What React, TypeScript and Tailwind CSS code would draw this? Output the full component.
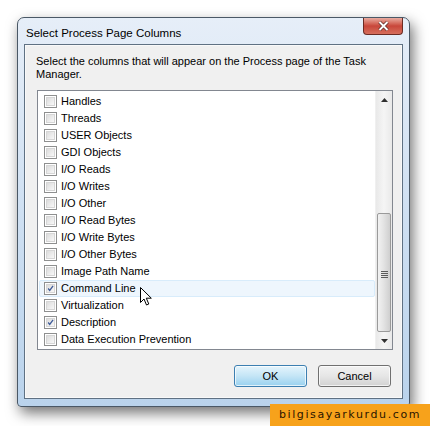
const columns = [
  { label: "Handles", checked: false },
  { label: "Threads", checked: false },
  { label: "USER Objects", checked: false },
  { label: "GDI Objects", checked: false },
  { label: "I/O Reads", checked: false },
  { label: "I/O Writes", checked: false },
  { label: "I/O Other", checked: false },
  { label: "I/O Read Bytes", checked: false },
  { label: "I/O Write Bytes", checked: false },
  { label: "I/O Other Bytes", checked: false },
  { label: "Image Path Name", checked: false },
  { label: "Command Line", checked: true, hover: true },
  { label: "Virtualization", checked: false },
  { label: "Description", checked: true },
  { label: "Data Execution Prevention", checked: false },
];

function CheckBox({ checked }: { checked: boolean }) {
  return (
    <div className="w-[13px] h-[13px] border border-[#8e8f8f] bg-white p-[1px] shrink-0">
      <div className="w-full h-full bg-gradient-to-br from-[#dcdcdc] to-[#f8f8f8] border border-[#d6d6d6] flex items-center justify-center">
        {checked && (
          <svg width="9" height="9" viewBox="0 0 9 9">
            <path d="M1.5 4.5 L3.5 7 L7.8 1.2" fill="none" stroke="#3c5a98" strokeWidth="1.6" />
          </svg>
        )}
      </div>
    </div>
  );
}

function ScrollBar() {
  return (
    <div className="w-[17px] h-full bg-gradient-to-r from-[#e9e9e9] via-[#f5f5f5] to-[#e9e9e9] flex flex-col border-l border-[#f0f0f0]">
      <div className="h-[17px] flex items-center justify-center">
        <svg width="7" height="4" viewBox="0 0 7 4"><path d="M0 4 L3.5 0 L7 4 Z" fill="#303030" /></svg>
      </div>
      <div className="flex-1 flex flex-col justify-end">
        <div className="h-[119px] mx-[1px] rounded-[2px] border border-[#9a9a9a] bg-gradient-to-r from-[#f2f2f2] via-[#e2e2e2] to-[#cfcfcf] flex items-center justify-center">
          <div className="flex flex-col gap-[1px] mt-[3px]">
            <div className="w-[7px] h-[1px] bg-[#5a5a5a]" />
            <div className="w-[7px] h-[1px] bg-[#5a5a5a]" />
            <div className="w-[7px] h-[1px] bg-[#5a5a5a]" />
            <div className="w-[7px] h-[1px] bg-[#5a5a5a]" />
          </div>
        </div>
      </div>
      <div className="h-[17px] flex items-center justify-center">
        <svg width="7" height="4" viewBox="0 0 7 4"><path d="M0 0 L7 0 L3.5 4 Z" fill="#303030" /></svg>
      </div>
    </div>
  );
}

function Cursor() {
  return (
    <svg width="13" height="20" viewBox="0 0 13 20" className="absolute left-[140px] top-[287px]">
      <path d="M0.5 0.5 L0.5 15.5 L4 12 L6.5 18 L8.8 17 L6.3 11.2 L11.3 11.2 Z" fill="white" stroke="black" strokeWidth="1" strokeLinejoin="miter" />
    </svg>
  );
}

export default function App() {
  return (
    <div className="relative w-[430px] h-[426px] bg-white overflow-hidden font-['Liberation_Sans',sans-serif] text-[11px] text-black">
      <div className="ml-[17px] mt-[17px] w-[393px] h-[390px] rounded-t-[7px] rounded-b-[4px] border border-[#4a5866] bg-gradient-to-b from-[#e6eef8] via-[#cfe0f2] to-[#bad3ec] shadow-[3px_6px_14px_rgba(0,0,0,0.55)] flex flex-col px-[6px] pb-[7px]">
        <div className="h-[26px] flex justify-between items-start shrink-0">
          <div className="pl-[2px] pt-[7px] text-[11.5px] text-black">Select Process Page Columns</div>
          <div className="w-[40px] h-[17px] rounded-b-[4px] border border-t-0 border-[#6b2b23] bg-gradient-to-b from-[#e8aba0] via-[#c8463a] to-[#d66e5c] flex items-center justify-center">
            <svg width="11" height="10" viewBox="0 0 11 10">
              <path d="M1.5 1 L9.5 9 M9.5 1 L1.5 9" stroke="#5a2a25" strokeWidth="3.4" />
              <path d="M1.5 1 L9.5 9 M9.5 1 L1.5 9" stroke="white" strokeWidth="1.9" />
            </svg>
          </div>
        </div>
        <div className="flex-1 border border-[#5f7183] bg-[#f0f0f0] flex flex-col">
          <div className="flex-1 bg-[#f0f0f0] border border-white/60 px-[10px] pt-[9px] flex flex-col">
            <p className="leading-[13px]">Select the columns that will appear on the Process page of the Task Manager.</p>
            <div className="mt-[9px] ml-[1px] h-[260px] w-[356px] border border-[#828790] bg-white flex">
              <div className="flex-1 pt-[2px] pl-[1px]">
                {columns.map((c) => (
                  <div
                    key={c.label}
                    className={`h-[17px] flex items-center gap-[4px] pl-[4px] rounded-[2px] ${c.hover ? "bg-[#eef6fd] border border-[#d8ecfb]" : "border border-transparent"}`}
                  >
                    <CheckBox checked={c.checked} />
                    <span className="leading-none">{c.label}</span>
                  </div>
                ))}
              </div>
              <ScrollBar />
            </div>
            <div className="flex justify-end gap-[11px] mt-[15px] mr-[0px]">
              <button className="w-[73px] h-[22px] rounded-[3px] border border-[#3c7fb1] bg-gradient-to-b from-[#e5f4fc] via-[#c4e5f6] to-[#98d1ef] shadow-[inset_0_0_0_1px_rgba(255,255,255,0.7)] text-[11px]">
                OK
              </button>
              <button className="w-[73px] h-[22px] rounded-[3px] border border-[#707070] bg-gradient-to-b from-[#f2f2f2] via-[#e6e6e6] to-[#d2d2d2] shadow-[inset_0_0_0_1px_rgba(255,255,255,0.7)] text-[11px]">
                Cancel
              </button>
            </div>
          </div>
        </div>
      </div>
      <Cursor />
      <div className="absolute right-0 bottom-0 w-[160px] h-[22px] bg-[#f7a21b] flex items-center justify-center whitespace-nowrap font-['DejaVu_Sans',sans-serif] text-[11px] tracking-[1.6px] text-[#2a1500]">
        bilgisayarkurdu.com
      </div>
    </div>
  );
}
